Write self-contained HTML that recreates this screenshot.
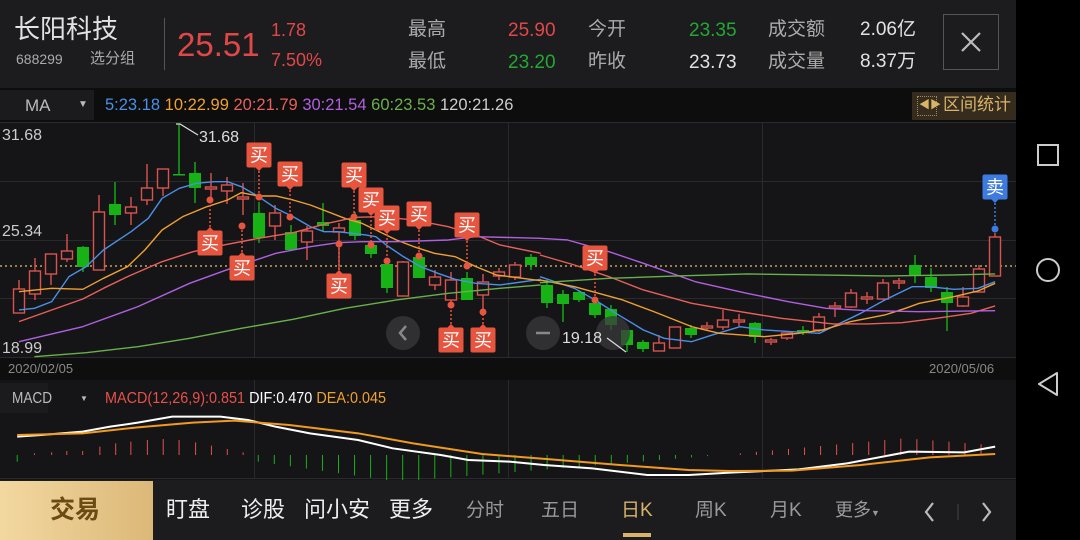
<!DOCTYPE html>
<html><head><meta charset="utf-8"><style>
*{margin:0;padding:0;box-sizing:border-box}
body{width:1080px;height:540px;background:#000;overflow:hidden;position:relative;font-family:"Liberation Sans","Noto Sans CJK SC",sans-serif}
.a{position:absolute;white-space:nowrap;line-height:1}
</style></head><body>
<div class="a" style="left:0;top:0;width:1016px;height:88px;background:#1c1c1e"></div>
<div class="a" style="left:14px;top:16px;font-size:26px;color:#e2e2e2">长阳科技</div>
<div class="a" style="left:16px;top:52px;font-size:14px;color:#aaa">688299</div>
<div class="a" style="left:90px;top:51px;font-size:15px;color:#aaa">选分组</div>
<div class="a" style="left:164px;top:18px;width:1px;height:52px;background:#555"></div>
<div class="a" style="left:177px;top:28px;font-size:33px;color:#e04848">25.51</div>
<div class="a" style="left:271px;top:21px;font-size:18px;color:#e04848">1.78</div>
<div class="a" style="left:271px;top:51px;font-size:18px;color:#e04848">7.50%</div>
<div class="a" style="left:408px;top:20px;font-size:19px;color:#aaa">最高</div>
<div class="a" style="left:408px;top:52px;font-size:19px;color:#aaa">最低</div>
<div class="a" style="left:508px;top:21px;font-size:19px;color:#e04848">25.90</div>
<div class="a" style="left:508px;top:53px;font-size:19px;color:#23a833">23.20</div>
<div class="a" style="left:588px;top:20px;font-size:19px;color:#aaa">今开</div>
<div class="a" style="left:588px;top:52px;font-size:19px;color:#aaa">昨收</div>
<div class="a" style="left:689px;top:21px;font-size:19px;color:#23a833">23.35</div>
<div class="a" style="left:689px;top:53px;font-size:19px;color:#e2e2e2">23.73</div>
<div class="a" style="left:768px;top:20px;font-size:19px;color:#aaa">成交额</div>
<div class="a" style="left:768px;top:52px;font-size:19px;color:#aaa">成交量</div>
<div class="a" style="left:860px;top:20px;font-size:19px;color:#e2e2e2">2.06亿</div>
<div class="a" style="left:860px;top:52px;font-size:19px;color:#e2e2e2">8.37万</div>
<div class="a" style="left:943px;top:14px;width:56px;height:56px;border:1px solid #555"></div>
<svg class="a" style="left:943px;top:14px" width="56" height="56"><path d="M19 19L37 37M37 19L19 37" stroke="#bbb" stroke-width="2.2"/></svg>

<div class="a" style="left:0;top:88px;width:1016px;height:34px;background:#0d0d0e"></div>
<div class="a" style="left:0;top:90px;width:94px;height:30px;background:#1b1b1d"></div>
<div class="a" style="left:25px;top:97px;font-size:17px;color:#bbb">MA</div>
<div class="a" style="left:78px;top:100px;font-size:10px;color:#bbb">▼</div>
<div class="a" style="left:105px;top:97px;font-size:16.5px"><span style="color:#4a8fe8">5:23.18</span> <span style="color:#f0a030">10:22.99</span> <span style="color:#e8605a">20:21.79</span> <span style="color:#b060e0">30:21.54</span> <span style="color:#6ab04c">60:23.53</span> <span style="color:#ccc">120:21.26</span></div>
<div class="a" style="left:912px;top:92px;width:104px;height:28px;background:#352c1e"></div>
<div class="a" style="left:917px;top:96px;width:20px;height:20px;border:1px dotted #a08860"></div>
<div class="a" style="left:919px;top:100px;font-size:11px;color:#d9b36a">◀▶</div>
<div class="a" style="left:943px;top:96px;font-size:17px;color:#d9b36a">区间统计</div>

<div class="a" style="left:0;top:122px;width:1016px;height:236px;background:#151517"></div>
<div class="a" style="left:0;top:358px;width:1016px;height:22px;background:#0e0e0f"></div>
<div class="a" style="left:0;top:380px;width:1016px;height:100px;background:#151517"></div>
<div class="a" style="left:1016px;top:0;width:64px;height:540px;background:#000"></div>

<svg class="a" style="left:0;top:0" width="1016" height="480" id="ch">
<g stroke="#2a2a2d" stroke-width="1">
<line x1="0" y1="122.5" x2="1016" y2="122.5"/><line x1="0" y1="181.5" x2="1016" y2="181.5"/><line x1="0" y1="240.5" x2="1016" y2="240.5"/><line x1="0" y1="298.5" x2="1016" y2="298.5"/><line x1="0" y1="357.5" x2="1016" y2="357.5"/>
<line x1="254.5" y1="122" x2="254.5" y2="358"/><line x1="508.5" y1="122" x2="508.5" y2="358"/><line x1="762.5" y1="122" x2="762.5" y2="358"/>
<line x1="254.5" y1="380" x2="254.5" y2="478"/><line x1="508.5" y1="380" x2="508.5" y2="478"/><line x1="762.5" y1="380" x2="762.5" y2="478"/>
<line x1="0" y1="478.5" x2="1016" y2="478.5"/>
</g>
<line x1="0" y1="266" x2="1016" y2="266" stroke="#e8c070" stroke-width="1.2" stroke-dasharray="2,3"/>
<g id="candles"></g>
<g fill="none" stroke-width="1.4" stroke-linejoin="round">
<g transform="translate(0,120) scale(0.3448,0.3333)">
<polyline vector-effect="non-scaling-stroke" stroke="#4a8fe8" points="55,570 100,565 150,545 200,470 250,440 300,390 380,335 430,295 470,235 520,205 570,190 620,185 660,185 700,200 750,230 800,265 850,290 900,320 940,335 980,335 1020,340 1060,345 1090,350 1120,375 1170,410 1220,440 1270,460 1320,478 1380,490 1450,495 1568,478"/>
<polyline vector-effect="non-scaling-stroke" stroke="#f0a030" points="55,515 150,505 240,508 300,475 370,440 420,390 470,330 530,290 600,260 660,240 700,218 750,228 800,228 850,240 900,255 950,275 1000,295 1050,310 1100,335 1150,360 1200,380 1260,400 1320,410 1380,440 1440,465 1568,482"/>
<polyline vector-effect="non-scaling-stroke" stroke="#e8605a" points="55,605 150,570 240,537 300,505 370,470 470,425 560,395 650,375 750,355 850,338 950,310 1030,292 1100,290 1200,300 1300,320 1380,345 1450,375 1568,400"/>
<polyline vector-effect="non-scaling-stroke" stroke="#b060e0" points="55,665 240,620 400,560 550,490 670,445 800,400 900,380 980,368 1050,365 1150,365 1300,360 1380,350 1568,355"/>
<polyline vector-effect="non-scaling-stroke" stroke="#6ab04c" points="100,710 250,698 400,680 550,655 700,625 850,598 1000,565 1150,540 1300,520 1450,505 1568,495"/>
</g>
<g transform="translate(540,120) scale(0.3448,0.3333)">
<polyline vector-effect="non-scaling-stroke" stroke="#4a8fe8" points="0,470 100,505 160,540 220,580 300,630 360,655 440,665 500,645 580,620 650,630 730,635 810,640 870,610 930,580 1000,540 1080,500 1130,500 1200,508 1270,505 1320,485"/>
<polyline vector-effect="non-scaling-stroke" stroke="#f0a030" points="0,480 100,500 240,540 330,575 440,620 520,640 650,650 750,640 820,630 900,605 1000,585 1060,565 1100,550 1200,530 1270,513 1320,490"/>
<polyline vector-effect="non-scaling-stroke" stroke="#e8605a" points="0,405 100,435 200,470 300,510 440,550 550,570 700,595 850,612 950,612 1050,608 1150,595 1250,580 1320,558"/>
<polyline vector-effect="non-scaling-stroke" stroke="#b060e0" points="0,355 80,360 200,395 300,430 450,485 600,520 720,545 830,565 950,572 1100,575 1320,572"/>
<polyline vector-effect="non-scaling-stroke" stroke="#6ab04c" points="0,488 200,475 400,468 600,462 800,465 1000,468 1200,465 1320,462"/>
</g>
</g>
<g fill="#3a3a3d" opacity="0.75"><circle cx="403" cy="333" r="17"/><circle cx="543" cy="333" r="17"/><circle cx="613" cy="333" r="17"/></g>
<path d="M406 326l-6 7 6 7" stroke="#888" stroke-width="2.5" fill="none"/>
<line x1="536" y1="333" x2="550" y2="333" stroke="#888" stroke-width="2.5"/>
<polyline points="176,124 180,124 198,135" stroke="#ddd" fill="none" stroke-width="1.2"/>
<polyline points="607,338 626,352" stroke="#ddd" fill="none" stroke-width="1.2"/>
<g id="marks"></g>
<g transform="translate(0,380) scale(0.6887,0.3333)">
<g id="bars"></g>
<polyline vector-effect="non-scaling-stroke" fill="none" stroke="#fff" stroke-width="2" points="25,170 60,165 120,155 160,140 200,128 250,110 320,110 360,120 400,140 450,160 520,180 570,205 640,225 680,240 740,245 790,255 860,265 940,285 1000,285 1060,278 1160,268 1230,250 1320,215 1400,217 1445,200"/>
<polyline vector-effect="non-scaling-stroke" fill="none" stroke="#f09a20" stroke-width="2" points="25,165 120,160 200,142 280,128 340,122 420,135 520,160 600,190 700,222 800,238 900,255 1000,270 1060,273 1150,272 1250,255 1350,232 1445,222"/>
</g>
</svg>

<div class="a" style="left:2px;top:128px;font-size:16px;color:#ccc">31.68</div>
<div class="a" style="left:199px;top:130px;font-size:16px;color:#ddd">31.68</div>
<div class="a" style="left:2px;top:224px;font-size:16px;color:#ccc">25.34</div>
<div class="a" style="left:2px;top:341px;font-size:16px;color:#ccc">18.99</div>
<div class="a" style="left:562px;top:331px;font-size:16px;color:#ddd">19.18</div>
<div class="a" style="left:8px;top:362px;font-size:13px;color:#888">2020/02/05</div>
<div class="a" style="left:929px;top:362px;font-size:13px;color:#888">2020/05/06</div>

<div class="a" style="left:0;top:383px;width:48px;height:30px;background:#1b1b1d"></div>
<div class="a" style="left:12px;top:391px;font-size:16px;color:#bbb;transform:scaleX(0.85);transform-origin:left">MACD</div>
<div class="a" style="left:80px;top:395px;font-size:8px;color:#bbb">▼</div>
<div class="a" style="left:105px;top:391px;font-size:16px;transform:scaleX(0.9);transform-origin:left"><span style="color:#e8504a">MACD(12,26,9):0.851</span> <span style="color:#fff">DIF:0.470</span> <span style="color:#f0a030">DEA:0.045</span></div>

<div class="a" style="left:0;top:480px;width:1016px;height:60px;background:#1c1c1e"></div>
<div class="a" style="left:0;top:481px;width:153px;height:59px;background:linear-gradient(90deg,#f2d8a0,#dcb878)"></div>
<div class="a" style="left:50px;top:498px;font-size:25px;font-weight:bold;color:#6b4a14">交易</div>
<div class="a" style="left:166px;top:499px;font-size:22px;color:#eee">盯盘</div>
<div class="a" style="left:241px;top:499px;font-size:22px;color:#eee">诊股</div>
<div class="a" style="left:304px;top:499px;font-size:22px;color:#eee">问小安</div>
<div class="a" style="left:389px;top:499px;font-size:22px;color:#eee">更多</div>
<div class="a" style="left:466px;top:501px;font-size:19px;color:#999">分时</div>
<div class="a" style="left:541px;top:501px;font-size:19px;color:#999">五日</div>
<div class="a" style="left:621px;top:501px;font-size:19px;color:#d9b36a">日K</div>
<div class="a" style="left:623px;top:533px;width:28px;height:4px;background:#d9b36a"></div>
<div class="a" style="left:695px;top:501px;font-size:19px;color:#999">周K</div>
<div class="a" style="left:770px;top:501px;font-size:19px;color:#999">月K</div>
<div class="a" style="left:835px;top:501px;font-size:18px;color:#999">更多<span style="font-size:9px">▼</span></div>
<svg class="a" style="left:915px;top:496px" width="90" height="32"><path d="M18 7l-7 9 7 9" stroke="#bbb" stroke-width="2.2" fill="none"/><line x1="43" y1="8" x2="43" y2="24" stroke="#444"/><path d="M68 7l7 9-7 9" stroke="#bbb" stroke-width="2.2" fill="none"/></svg>

<svg class="a" style="left:1016px;top:0" width="64" height="540">
<rect x="22" y="145" width="20" height="20" fill="none" stroke="#ccc" stroke-width="2"/>
<circle cx="32" cy="270" r="11" fill="none" stroke="#ccc" stroke-width="2"/>
<path d="M41 373L23 384L41 395Z" fill="none" stroke="#ccc" stroke-width="2" stroke-linejoin="round"/>
</svg>

<script>
var NS="http://www.w3.org/2000/svg";
function el(p,t,a){var e=document.createElementNS(NS,t);for(var k in a)e.setAttribute(k,a[k]);p.appendChild(e);return e;}
// [top,bottom,wickTop,wickBottom,color r/g]
var C=[[289,313,280,313,'r'],[271,294,258,300,'r'],[254,274,254,285,'r'],[251,259,234,262,'r'],[247,267,246,272,'g'],[212,270,195,270,'r'],[204,215,182,225,'g'],[207,213,197,225,'r'],[188,200,164,205,'r'],[169,188,169,196,'r'],[174,175,124,175,'g'],[173,188,162,203,'g'],[187,189,173,200,'r'],[185,191,177,204,'r'],[197,199,183,215,'r'],[213,238,202,243,'g'],[213,226,205,240,'r'],[232,250,225,250,'g'],[231,242,226,260,'r'],[222,226,203,231,'g'],[228,232,223,270,'r'],[220,236,212,240,'g'],[245,254,245,258,'g'],[264,288,262,293,'g'],[262,296,261,296,'r'],[257,278,257,278,'g'],[277,285,270,290,'r'],[280,300,272,305,'r'],[278,300,272,300,'g'],[282,295,274,315,'r'],[272,276,268,280,'r'],[265,277,262,280,'r'],[257,265,254,270,'g'],
[285,303,280,308,'g'],[294,304,290,322,'g'],[292,300,290,302,'g'],[303,315,300,318,'g'],[309,325,305,330,'g'],[330,345,330,352,'g'],[342,349,340,352,'g'],[343,351,335,351,'r'],[327,348,327,348,'r'],[328,335,325,338,'g'],[326,328,322,330,'r'],[320,327,310,330,'r'],[320,322,314,326,'r'],[323,337,322,343,'g'],[340,342,338,345,'r'],[333,338,333,340,'r'],[330,333,326,335,'g'],[317,330,313,332,'r'],[306,308,302,317,'r'],[293,307,289,308,'r'],[297,299,292,304,'r'],[283,299,279,300,'r'],[281,283,278,289,'r'],[265,275,255,283,'g'],[277,288,268,292,'g'],[292,303,287,331,'g'],[297,306,287,307,'r'],[269,292,265,292,'r'],[237,276,233,276,'r']];
var g=document.getElementById('candles');var n=C.length;
for(var i=0;i<n;i++){var x=19+i*(995-19)/(n-1);var c=C[i];var col=c[4]=='r'?'#d9534f':'#16b216';
el(g,'line',{x1:x,y1:c[2],x2:x,y2:c[3],stroke:col,'stroke-width':1.4});
var h=Math.max(c[1]-c[0],1.5);
if(c[4]=='r')el(g,'rect',{x:x-5.5,y:c[0],width:11,height:h,fill:'#151517',stroke:col,'stroke-width':1.4});
else el(g,'rect',{x:x-6,y:c[0],width:12,height:h,fill:col});}
var M=[[210,243,200],[242,268,226],[259,155,197],[290,174,217],[339,286,244],[354,175,217],[371,200,245],[387,218,261],[419,214,256],[467,225,266],[451,340,305],[483,340,312],[595,258,300]];
var mg=document.getElementById('marks');
function mark(cx,cy,dy,col,t){el(mg,'line',{x1:cx,y1:cy,x2:cx,y2:dy,stroke:col,'stroke-width':1.5,'stroke-dasharray':'2,2'});
el(mg,'circle',{cx:cx,cy:dy,r:3.5,fill:col});
el(mg,'rect',{x:cx-12.5,y:cy-12.5,width:25,height:25,rx:2,fill:col});
var up=dy<cy;el(mg,'path',{d:up?'M'+(cx-4)+' '+(cy-12)+'l4 -4 4 4z':'M'+(cx-4)+' '+(cy+12)+'l4 4 4 -4z',fill:col});
var tx=el(mg,'text',{x:cx,y:cy+6.5,'text-anchor':'middle','font-size':18,fill:'#fff','font-family':'Noto Sans CJK SC, sans-serif'});tx.textContent=t;}
M.forEach(function(m){mark(m[0],m[1],m[2],'#e8553f','买');});
mark(995,187,229,'#3d7be0','卖');
var b=document.getElementById('bars');
function bar(x,h,col){el(b,'line',{x1:x,y1:225,x2:x,y2:225-h,stroke:col,'stroke-width':1,'vector-effect':'non-scaling-stroke'});}
var rx=[25,50,75,97,120,145,168,190,214,237,260,284,307,330,353];var rh=[-20,5,8,12,12,25,35,40,45,48,45,38,28,18,8];
rx.forEach(function(x,i){bar(x,rh[i],rh[i]<0?'#16b216':'#e8504a');});
for(var x=375,k=0;x<=1050;x+=23.3,k++){var t=(x-375)/675;var h=-(Math.sin(Math.min(1,t*1.6)*Math.PI)*0+ (t<0.3?20+t*200:Math.max(3,80-(t-0.3)*115)));bar(x,h,'#16b216');}
for(var x=1075;x<=1445;x+=23.3){var t=(x-1075)/370;var h=t<0.65?5+t*70:50-(t-0.65)*60;bar(x,h,'#e8504a');}
</script>
</body></html>
